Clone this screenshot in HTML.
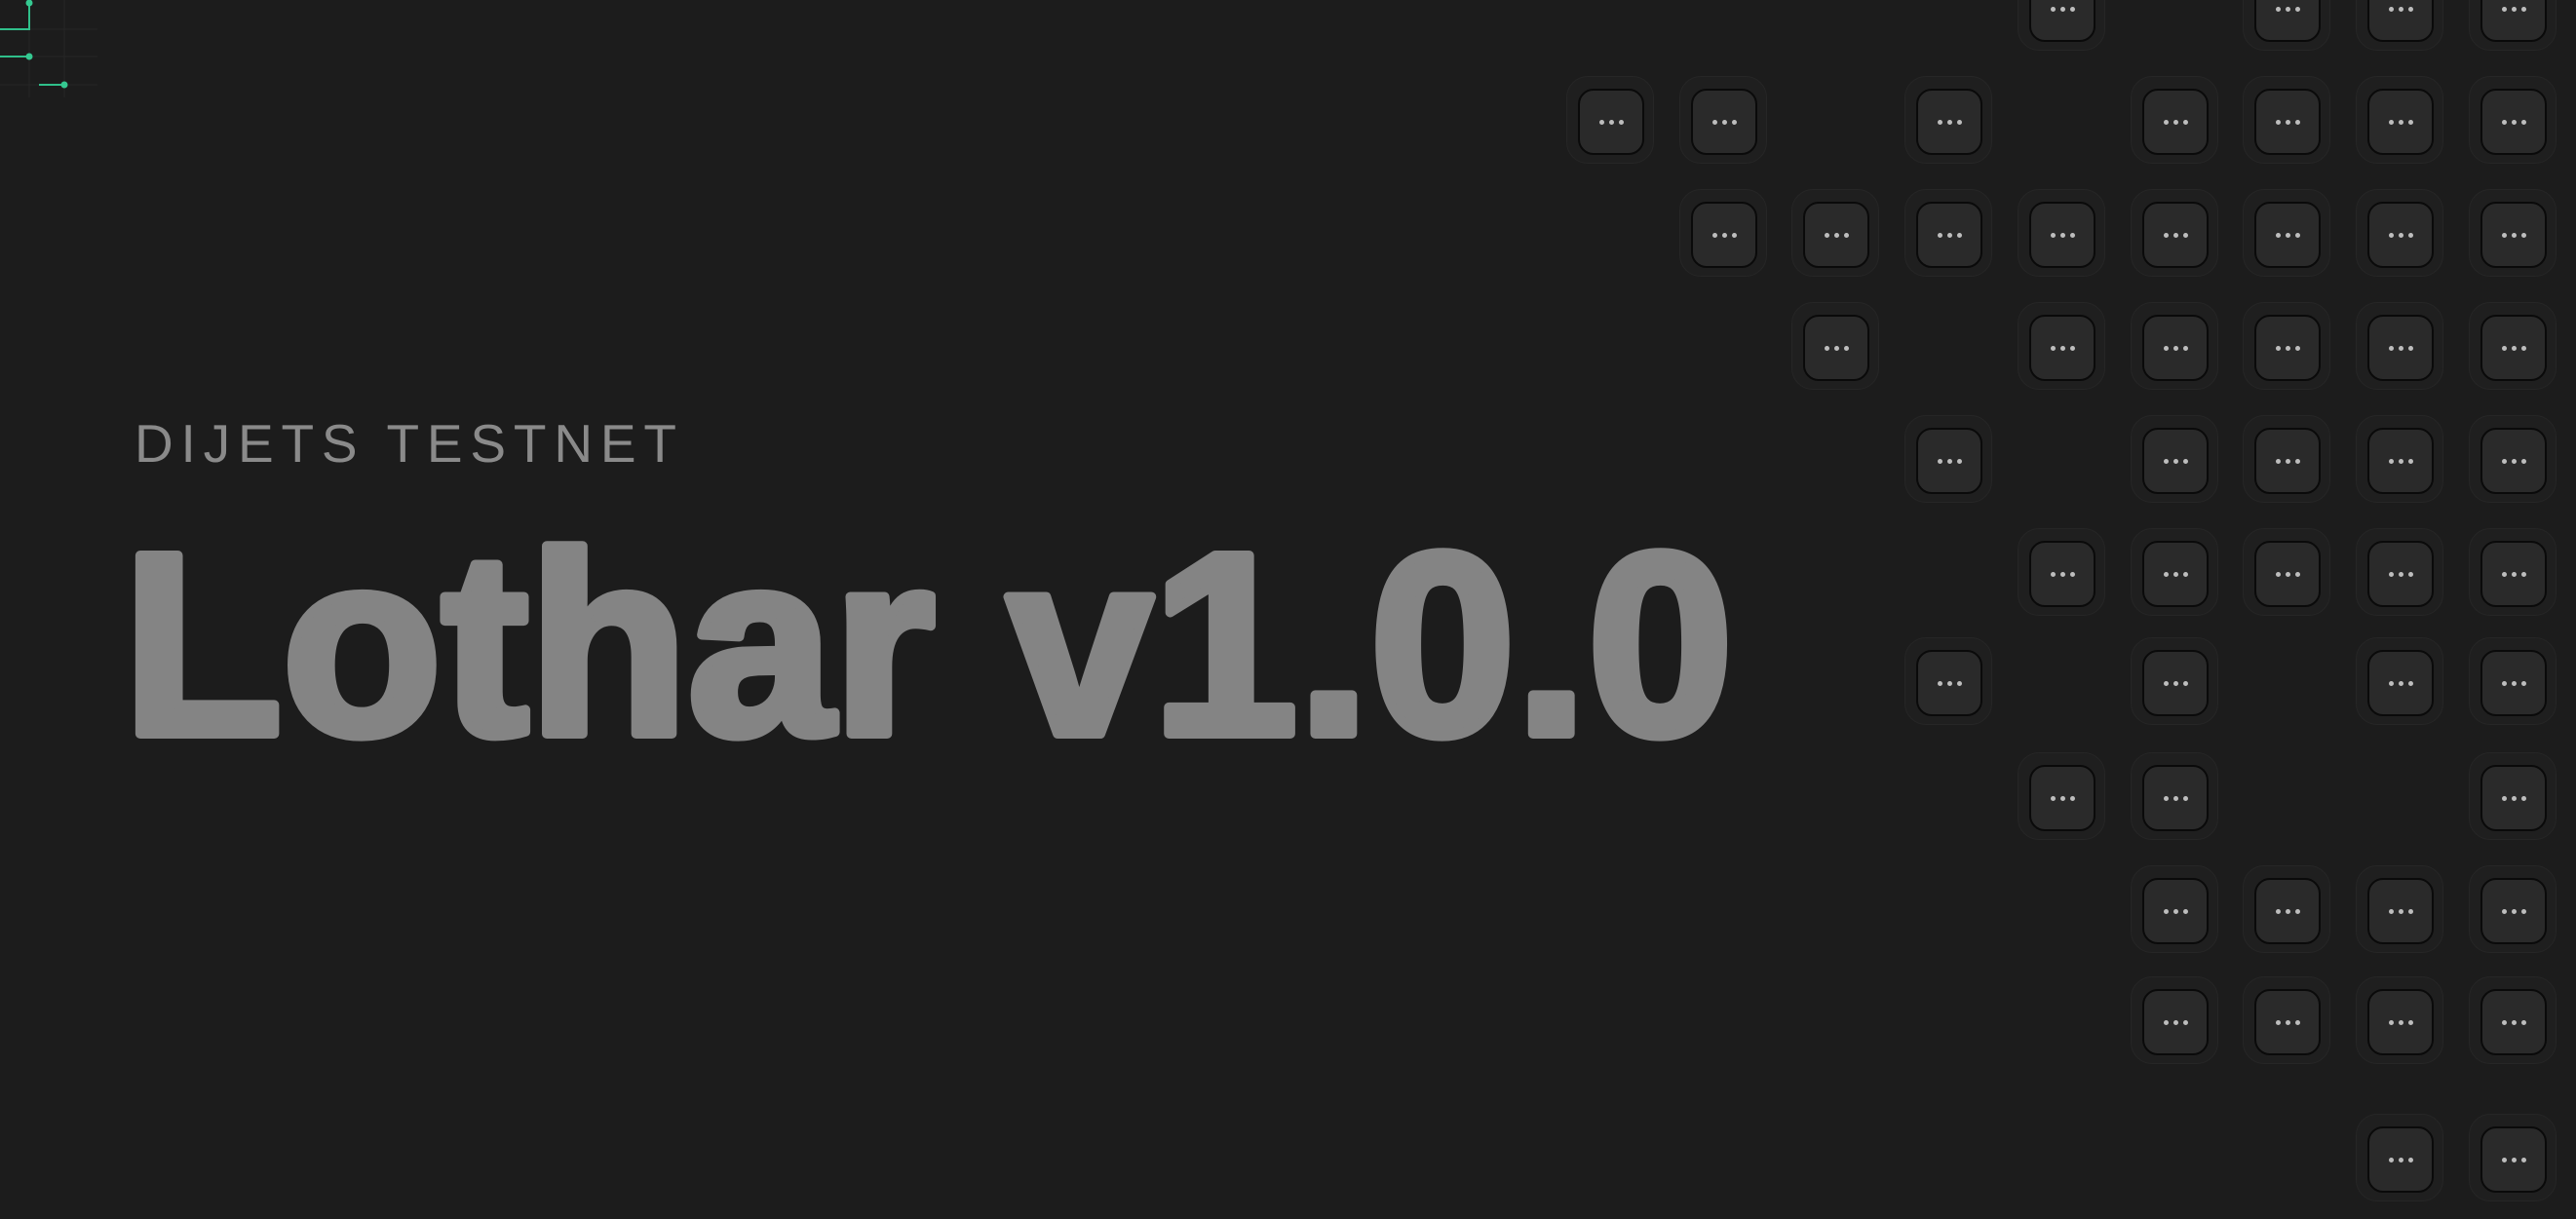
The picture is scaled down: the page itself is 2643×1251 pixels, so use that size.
<!DOCTYPE html>
<html><head><meta charset="utf-8"><style>
html,body{margin:0;padding:0;background:#1c1c1c;}
body{width:2643px;height:1251px;position:relative;overflow:hidden;font-family:"Liberation Sans",sans-serif;}
.t{position:absolute;width:90px;height:90px;border-radius:22px;background:#1f1f1f;border:1px solid #262626;box-sizing:border-box;}
.t i{position:absolute;left:11px;top:12px;width:68px;height:68px;box-sizing:border-box;border:2px solid #0a0a0a;border-radius:16px;background:#2a2a2a;}
.t i:after{content:"";position:absolute;left:50%;top:50%;width:5px;height:5px;margin:-2.5px 0 0 -2.5px;border-radius:50%;background:#bdbdbd;box-shadow:-10px 0 0 #bdbdbd,10px 0 0 #bdbdbd;}
</style></head><body>
<svg width="2643" height="1251" style="position:absolute;left:0;top:0">
<g stroke="#262626" stroke-width="1"><line x1="30" y1="0" x2="30" y2="100"/><line x1="66" y1="0" x2="66" y2="100"/><line x1="0" y1="30" x2="100" y2="30"/><line x1="0" y1="58" x2="100" y2="58"/><line x1="0" y1="87" x2="100" y2="87"/></g>
<g stroke="#2fbf8a" stroke-width="2" fill="none"><path d="M0 30H30V3"/><path d="M0 58H30"/><path d="M40 87H66"/></g>
<g fill="#35c991"><circle cx="30" cy="3" r="3.5"/><circle cx="30" cy="58" r="3.5"/><circle cx="66" cy="87" r="3.5"/></g>
<text x="138" y="474" font-family="Liberation Sans" font-size="55" fill="#8a8a8a" textLength="556" lengthAdjust="spacing">DIJETS TESTNET</text>
<text x="126" y="753" font-family="Liberation Sans" font-weight="bold" font-size="266" fill="#848484" stroke="#848484" stroke-width="10" stroke-linejoin="round" textLength="1652" lengthAdjust="spacingAndGlyphs">Lothar v1.0.0</text>
</svg>
<div id="g"></div>
<script>
var rows=[[8,[4,6,7,8]],[124,[0,1,3,5,6,7,8]],[240,[1,2,3,4,5,6,7,8]],[356,[2,4,5,6,7,8]],[472,[3,5,6,7,8]],[588,[4,5,6,7,8]],[700,[3,5,7,8]],[818,[4,5,8]],[934,[5,6,7,8]],[1048,[5,6,7,8]],[1189,[7,8]]];
var h="";rows.forEach(function(r){r[1].forEach(function(c){var cx=1652+c*115.7;h+='<div class="t" style="left:'+(cx-45).toFixed(0)+'px;top:'+(r[0]-46)+'px"><i></i></div>';});});
document.getElementById("g").innerHTML=h;
</script>
</body></html>
